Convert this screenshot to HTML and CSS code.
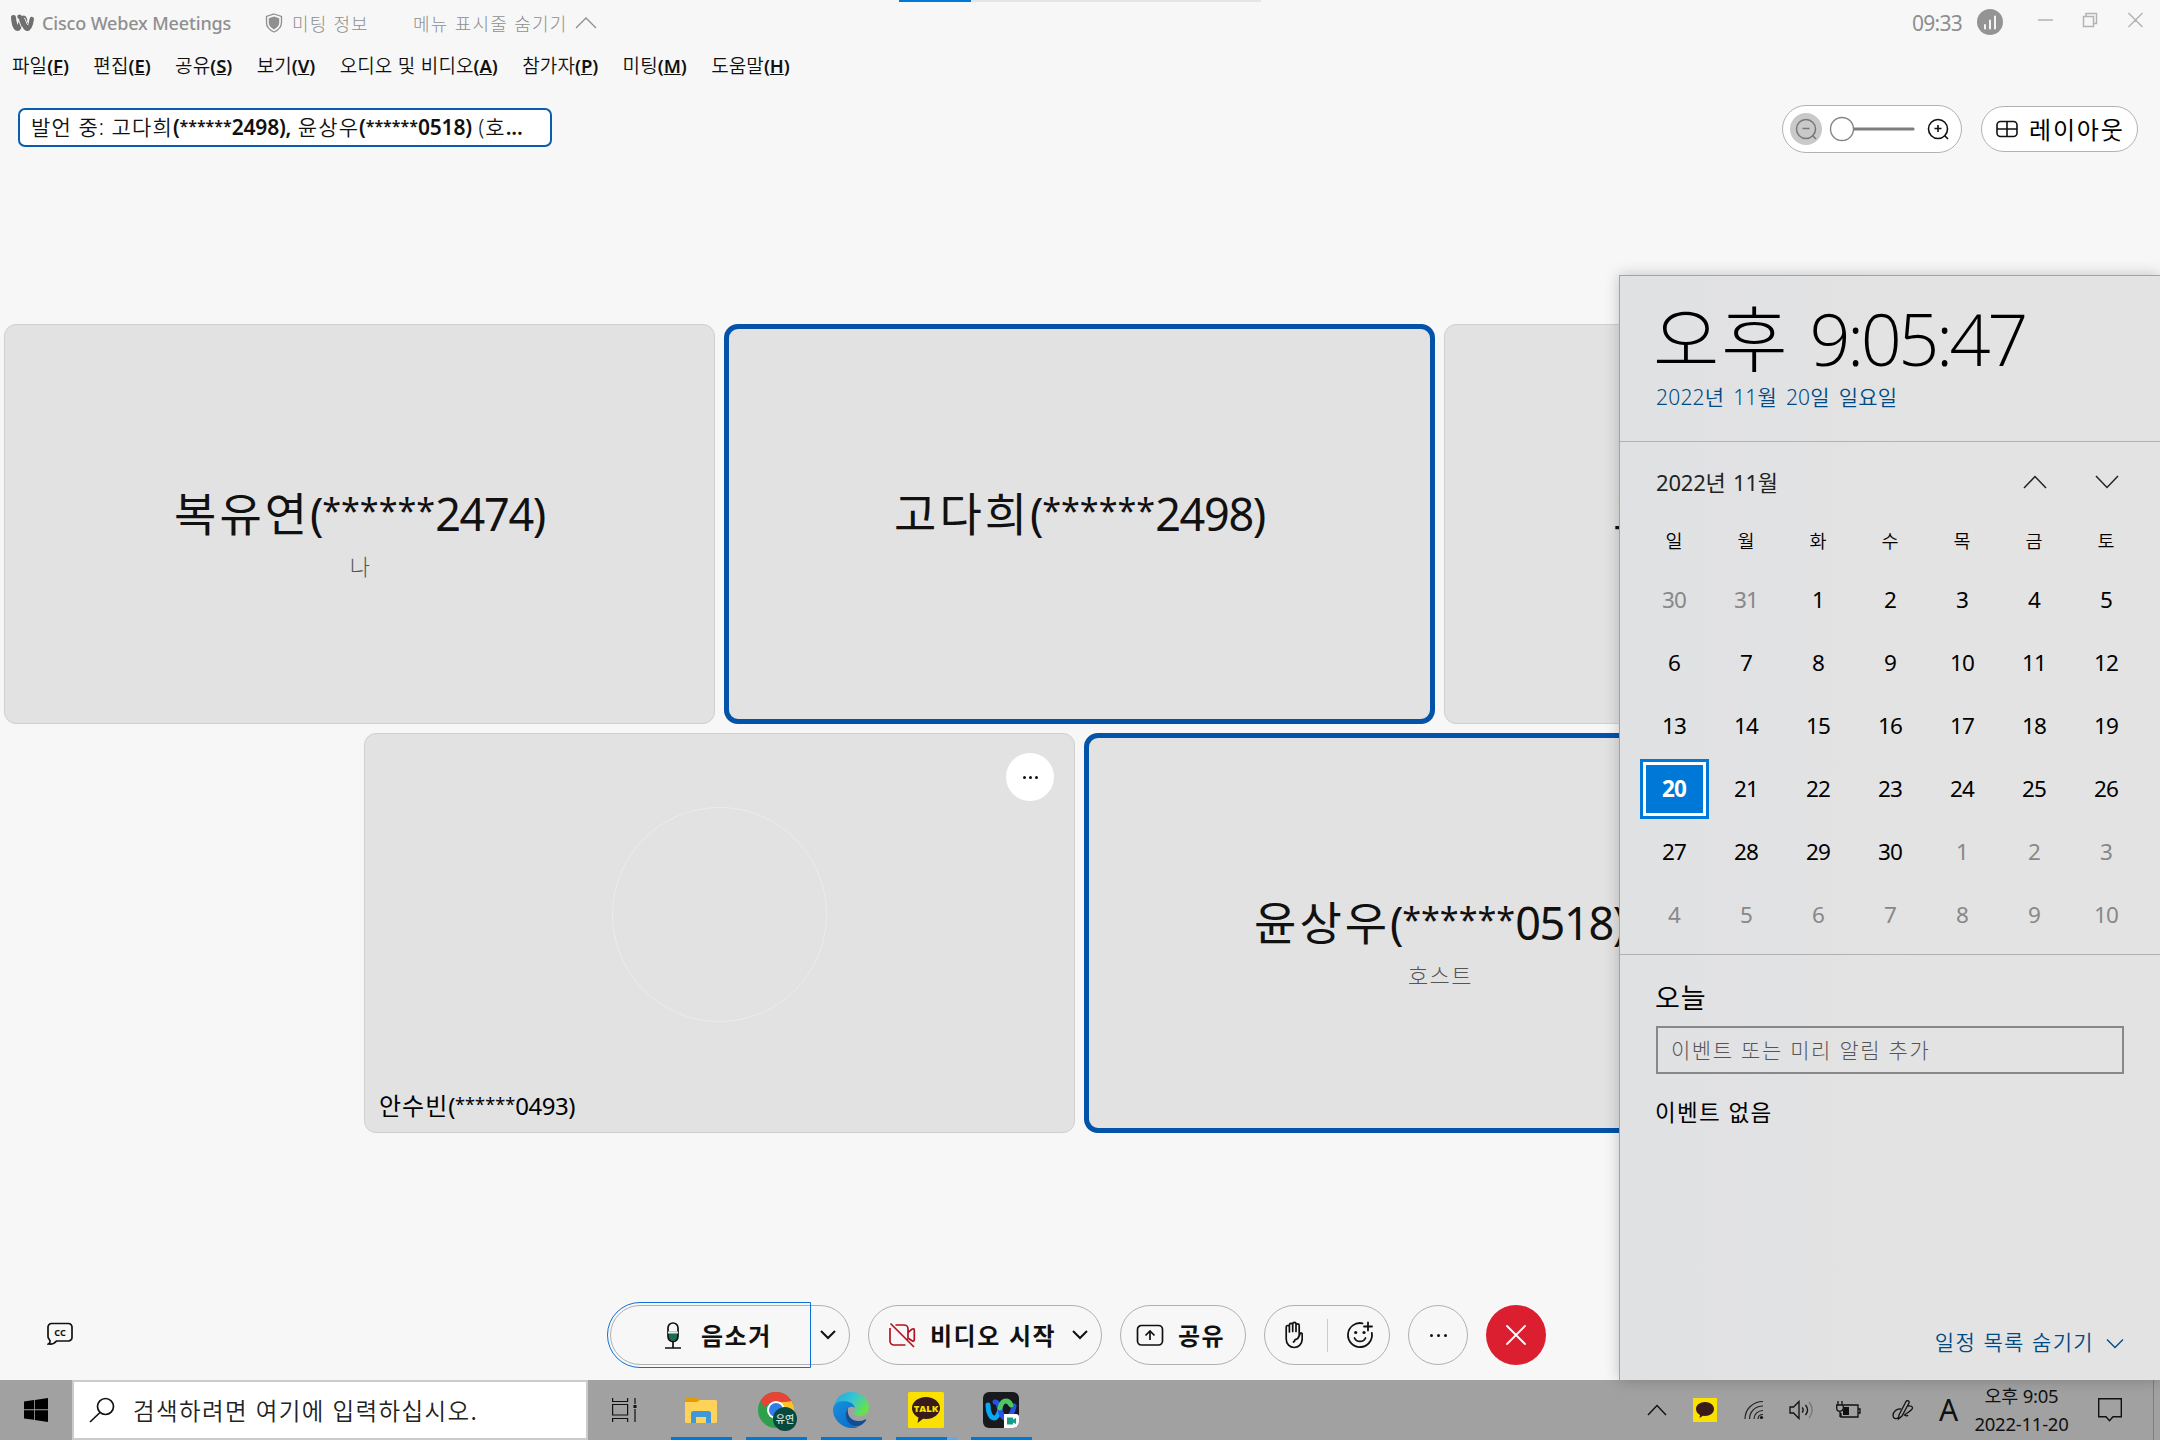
FILE: index.html
```html
<!DOCTYPE html>
<html lang="ko">
<head>
<meta charset="utf-8">
<title>Cisco Webex Meetings</title>
<link rel="stylesheet" href="styles.css">
</head>
<body>
<div class="desktop">
  <main class="app">
    <div class="progress"><i></i></div>
    <header class="titlebar">
      <svg class="brand" width="24" height="18" viewBox="0 0 24 18" fill="none" stroke="#6f6f6f" stroke-linecap="round"><path stroke-width="5" d="M3.500 3.500c.5 7 2.500 11 4.500 11S11.500 4 13.500 4s2 10.500 4 10.500"/><path stroke-width="4.500" d="M9.500 2.800c3 0 3.500 11.700 7.500 11.700 3 0 4.200-5 4.700-9.500"/><path stroke="#f7f7f7" stroke-width="1" d="M8.500 6c1.500 2 1.700 6 3.500 8M14.500 4c2 2 1.500 6 3.500 7M19.500 4c-1 1-1.500 3-2 4"/></svg>
      <span class="app-name">Cisco Webex Meetings</span>
      <svg class="shield" width="18" height="20" viewBox="0 0 18 20"><path d="M9 1l7.500 2.500v6c0 4.500-3 7.500-7.500 9.500C4.500 17 1.500 14 1.500 9.500v-6z" fill="none" stroke="#8f8f8f" stroke-width="1.300"/><path d="M9 3.500l5.200 1.800v4.500c0 3-2 5-5.200 6.700-3.200-1.700-5.200-3.700-5.200-6.700V5.300z" fill="#8f8f8f"/></svg>
      <span class="info">미팅 정보</span>
      <span class="hide-menu">메뉴 표시줄 숨기기</span>
      <svg width="22" height="12" viewBox="0 0 22 12" fill="none" stroke="#8f8f8f" stroke-width="1.300"><path d="M1 11L11 1l10 10"/></svg>
      <div class="window-tools">
        <span class="elapsed">09:33</span>
        <svg class="signal" width="26" height="26" viewBox="0 0 26 26"><circle cx="13" cy="13" r="13" fill="#949494"/><path d="M8 16v3.500M13 11.500v8M18 7.500v12" stroke="#f4f4f4" stroke-width="2" stroke-linecap="round"/></svg>
        <svg class="win-icons" width="108" height="18" viewBox="0 0 108 18" fill="none" stroke="#b3b3b3" stroke-width="1.500"><path d="M1 9h15M46.500 5.500h10v10h-10zM49 5.500V2.500h10.500v10h-3M91.500 2l14 14M105.500 2l-14 14"/></svg>
      </div>
    </header>
    <nav class="menu">
      <span>파일<b>(<u>F</u>)</b></span><span>편집<b>(<u>E</u>)</b></span><span>공유<b>(<u>S</u>)</b></span><span>보기<b>(<u>V</u>)</b></span><span>오디오 및 비디오<b>(<u>A</u>)</b></span><span>참가자<b>(<u>P</u>)</b></span><span>미팅<b>(<u>M</u>)</b></span><span>도움말<b>(<u>H</u>)</b></span>
    </nav>
    <section class="status-row">
      <div class="speaking">발언 중: 고다희<b>(<span class="mask">******</span>2498),</b> 윤상우<b>(<span class="mask">******</span>0518)</b> (호<b>...</b></div>
      <div class="zoom-bar">
        <svg width="178" height="46" viewBox="0 0 178 46" fill="none"><circle cx="23" cy="23" r="16" fill="#c9c9c9"/><g stroke="#777" stroke-width="1.500"><circle cx="23" cy="23" r="9.500"/><path d="M29.500 29.500l3.500 3.500M19.500 22.500h7"/></g><path d="M71 23h59" stroke="#7d7d7d" stroke-width="3.200" stroke-linecap="round"/><circle cx="59" cy="23" r="11.500" fill="#fff" stroke="#858585" stroke-width="1.400"/><g stroke="#111" stroke-width="1.600"><circle cx="155" cy="23" r="9.500"/><path d="M161.500 29.500l3.500 3.500M151.500 22.500h7M155 19v7"/></g></svg>
      </div>
      <div class="layout-button">
        <svg width="22" height="18" viewBox="0 0 22 18" fill="none" stroke="#111" stroke-width="1.600"><rect x="1" y="1.500" width="20" height="15" rx="3.500"/><path d="M11 1.500v15M1 9h20"/></svg><span>레이아웃</span>
      </div>
    </section>
    <section class="stage">
      <div class="tile-row">
        <article class="tile"><h2>복유연<span class="id">(<span class="mask">******</span>2474)</span></h2><p>나</p></article>
        <article class="tile active"><h2>고다희<span class="id">(<span class="mask">******</span>2498)</span></h2></article>
        <article class="tile covered"><h2>고</h2></article>
      </div>
      <div class="tile-row second">
        <article class="tile camera"><div class="avatar"></div><div class="tile-more"><i></i><i></i><i></i></div><span class="caption">안수빈<span class="id">(<span class="mask">******</span>0493)</span></span></article>
        <article class="tile active"><h2>윤상우<span class="id">(<span class="mask">******</span>0518)</span></h2><p>호스트</p></article>
      </div>
    </section>
    <footer class="controls">
      <svg class="cc" width="26" height="24" viewBox="0 0 26 24"><path d="M4.500 1.500h17a3.500 3.500 0 0 1 3.500 3.500v10.500a3.500 3.500 0 0 1-3.500 3.500H9.500C8 21 5 22.500 1.500 22c2-1.500 2-3 .8-4.500C1.500 16.500 1 16 1 14.500V5A3.500 3.500 0 0 1 4.500 1.500z" fill="none" stroke="#111" stroke-width="1.700"/><text x="13" y="14" text-anchor="middle" class="cc-text">CC</text></svg>
      <div class="buttons">
        <div class="pill mute">
          <div class="mute-main"><svg width="18" height="27" viewBox="0 0 18 27" fill="none" stroke="#111" stroke-width="1.700"><path d="M4 9.500h10v4.500a5 5 0 0 1-10 0z" fill="#1d6b50" stroke="none"/><rect x="4" y="1" width="10" height="18.500" rx="5"/><path d="M4 10.500h10" stroke="#dfece7" stroke-width="2"/><path d="M9 19.500V22M9 22v3.500M1 26h16"/></svg><span>음소거</span></div>
          <svg class="down" width="16" height="10" viewBox="0 0 16 10"><path d="M1 1l7 7 7-7"/></svg>
        </div>
        <div class="pill video">
          <svg width="28" height="26" viewBox="0 0 28 26" fill="none" stroke="#b3131f" stroke-width="1.700"><path d="M2 6v13a4 4 0 0 0 4 4h11.500M7.500 3H16a4 4 0 0 1 4 4v10.500M20 10.500l4-3.300c1.300-.9 2.300-.4 2.300 1v9.500c0 1.400-1 1.900-2.300 1L20 16M2.500 1.500l23.500 23.500"/></svg><span>비디오 시작</span><svg class="down" width="16" height="10" viewBox="0 0 16 10"><path d="M1 1l7 7 7-7"/></svg>
        </div>
        <div class="pill share"><svg width="28" height="24" viewBox="0 0 28 24" fill="none" stroke="#111" stroke-width="1.700"><rect x="1.500" y="2.500" width="25" height="19.500" rx="4"/><path d="M14 17V8M9.500 12.500L14 8l4.500 4.500"/></svg><span>공유</span></div>
        <div class="pill react">
          <svg width="18" height="28" viewBox="0 0 18 28" fill="none" stroke="#111" stroke-width="1.700" stroke-linejoin="round" stroke-linecap="round"><path d="M1.200 18V6c0-2 3.200-2 3.200 0v5M4.400 10V4c0-2.200 3.300-2.200 3.300 0v6.500M7.700 10V3c0-2.200 3.300-2.200 3.300 0v7.500M11 10V4.500c0-2.100 3.200-2.100 3.200 0V15l.8-2c.7-1.600 2.200-1.200 2.200.2V18c0 5-3.600 8.500-8 8.500s-8-3.500-8-8.500M14.200 14.500c-.5 2.500-1.700 3.700-4 4-.2 1-.7 1.800-1.700 2.500"/></svg>
          <i></i>
          <svg width="28" height="28" viewBox="0 0 28 28" fill="none" stroke="#111" stroke-width="1.800" stroke-linecap="round"><path d="M16.500 2.300A12 12 0 1 0 25.800 12M22 1.500v8M18 5.500h8M8.500 17c2 4.500 9 4.500 11 0"/><circle cx="9.700" cy="11.500" r="1.600" fill="#111" stroke="none"/><circle cx="18" cy="11.500" r="1.600" fill="#111" stroke="none"/></svg>
        </div>
        <div class="pill more"><i></i><i></i><i></i></div>
        <div class="leave"><svg width="20" height="20" viewBox="0 0 20 20" stroke="#fff" stroke-width="1.800" stroke-linecap="round"><path d="M1 1l18 18M19 1L1 19"/></svg></div>
      </div>
    </footer>
  </main>

  <aside class="flyout">
    <div class="now"><div class="clock"><span>오후</span>9:05:47</div><div class="long-date">2022년 11월 20일 일요일</div></div>
    <div class="calendar">
      <div class="month-head"><span>2022년 11월</span><svg width="24" height="14" viewBox="0 0 24 14"><path d="M1 13L12 1.500 23 13"/></svg><svg width="24" height="14" viewBox="0 0 24 14"><path d="M1 1l11 11.500L23 1"/></svg></div>
      <div class="weekdays"><span>일</span><span>월</span><span>화</span><span>수</span><span>목</span><span>금</span><span>토</span></div>
      <div class="days">
        <span class="dim">30</span><span class="dim">31</span><span>1</span><span>2</span><span>3</span><span>4</span><span>5</span>
        <span>6</span><span>7</span><span>8</span><span>9</span><span>10</span><span>11</span><span>12</span>
        <span>13</span><span>14</span><span>15</span><span>16</span><span>17</span><span>18</span><span>19</span>
        <span class="today">20</span><span>21</span><span>22</span><span>23</span><span>24</span><span>25</span><span>26</span>
        <span>27</span><span>28</span><span>29</span><span>30</span><span class="dim">1</span><span class="dim">2</span><span class="dim">3</span>
        <span class="dim">4</span><span class="dim">5</span><span class="dim">6</span><span class="dim">7</span><span class="dim">8</span><span class="dim">9</span><span class="dim">10</span>
      </div>
    </div>
    <div class="agenda">
      <h3>오늘</h3>
      <div class="event-input">이벤트 또는 미리 알림 추가</div>
      <p>이벤트 없음</p>
      <div class="hide-agenda"><span>일정 목록 숨기기</span><svg width="18" height="10" viewBox="0 0 18 10"><path d="M1 .5l8 8 8-8"/></svg></div>
    </div>
  </aside>

  <div class="taskbar">
    <div class="start"><svg width="24" height="24" viewBox="0 0 24 24"><path d="M0 3.400L10 2v9.300H0zM10.800 1.900L24 0v11.300H10.800zM0 12.200h10v9.600L0 20.600zM10.800 12.200H24V24l-13.200-1.900z"/></svg></div>
    <div class="search"><svg width="26" height="26" viewBox="0 0 26 26" fill="none" stroke="#111" stroke-width="1.700"><circle cx="16.500" cy="9.500" r="8"/><path d="M11 15.500L1 25"/></svg><span>검색하려면 여기에 입력하십시오.</span></div>
    <div class="taskview"><svg width="25" height="24" viewBox="0 0 25 24" fill="none" stroke="#111" stroke-width="1.200"><path d="M.6 0v3.500h15V0M.6 6.500h15v10.500H.6zM.6 24v-3.500h15V24M23 0v6M23 11v13"/><path d="M21.500 7h3v3h-3z" fill="#111" stroke="none"/></svg></div>
    <div class="tasks">
      <div class="task"><svg width="36" height="36" viewBox="0 0 36 36"><path d="M2 7a1.500 1.500 0 0 1 1.500-1.500H14l3 3H32A2 2 0 0 1 34 11v5H2z" fill="#e09d08"/><path d="M2 10h12l3-2h15.500A1.500 1.500 0 0 1 34 9.500V29.500A1.500 1.500 0 0 1 32.500 31h-29A1.500 1.500 0 0 1 2 29.500z" fill="#ffd35a"/><path d="M8 31V21.500A2.500 2.500 0 0 1 10.500 19h15a2.500 2.500 0 0 1 2.500 2.500V31h-5v-6H13v6z" fill="#3f97dc"/></svg></div>
      <div class="task"><svg class="chrome" width="40" height="40" viewBox="0 0 40 40"><circle cx="18" cy="18" r="18" fill="#2da04b"/><path d="M18 18L2.400 9A18 18 0 0 1 33.600 9z" fill="#e74336"/><path d="M18 9H33.600A18 18 0 0 1 18 36l8-13.500z" fill="#fbc22c"/><path d="M2.400 9l7.800 13.500L18 18 10 10z" fill="#2da04b"/><path d="M8 9h25.600L28 10H12l-6 5-3.600-6z" fill="#e74336"/><circle cx="18" cy="18" r="9" fill="#fff"/><circle cx="18" cy="18" r="7" fill="#2f7de9"/><circle cx="27" cy="27" r="12" fill="#08493f"/><text x="27" y="30.800" text-anchor="middle" class="profile-text">유연</text></svg></div>
      <div class="task"><svg width="36" height="36" viewBox="0 0 36 36"><defs><linearGradient id="eg" x1="0" y1="0" x2="1" y2=".5"><stop offset="0" stop-color="#22a5df"/><stop offset=".55" stop-color="#35c7d2"/><stop offset="1" stop-color="#69e04b"/></linearGradient><linearGradient id="eb" x1="0" y1="0" x2=".7" y2="1"><stop offset="0" stop-color="#1b8fdc"/><stop offset="1" stop-color="#0870cc"/></linearGradient></defs><path d="M1 14C3 5 10 0 18 0c10 0 18 7 18 15 0 6-4 9-9 9-4 0-6-1.500-6-3 0-1 1-2 1-4 0-5-5-8-10-8-5 0-9 2-11 5z" fill="url(#eg)"/><path d="M0 18c0-6 5-9 11-9 6 0 10 3 11 7-4-3-9 0-9 6 0 8 6 13 12 13.500C12 39 0 29 0 18z" fill="url(#eb)"/><path d="M15 16c-5 7-1 19 10 18.500 3-1 6-3 8-6 .5-1-.3-1.500-1-1-8 4-19 0-17-11.500z" fill="#104f96"/></svg></div>
      <div class="task talk"><svg width="36" height="36" viewBox="0 0 36 36"><rect width="36" height="36" rx="1.500" fill="#fae100"/><path d="M18 5c8 0 14 5 14 11s-6 11-14 11l-3-.3L9.500 31l1-5.500C6.500 23.500 4 20 4 16 4 10 10 5 18 5z" fill="#391b1b"/><text x="18" y="20" text-anchor="middle" class="talk-text">TALK</text></svg></div>
      <div class="task"><svg width="36" height="36" viewBox="0 0 36 36" fill="none" stroke-linecap="round"><rect width="36" height="36" rx="6" fill="#17191c"/><path d="M5 13c0 8 3 13 6 13s5-5 6-9" stroke="#0aa7f5" stroke-width="5"/><path d="M12 10c5-1 5 16 10 16 5 0 8-6 9-12" stroke="#2752e6" stroke-width="5"/><path d="M17 16c1-4 3-7 6-7 2.500 0 4 2 5 4" stroke="#4cc764" stroke-width="5"/><path d="M21 22h12a3 3 0 0 1 3 3v5a6 6 0 0 1-6 6h-9z" fill="#fff"/><path d="M24 25.500h6v2l3-1.500v6l-3-1.500v2h-6z" fill="#159e83"/></svg></div>
    </div>
    <div class="tray">
      <svg width="20" height="12" viewBox="0 0 20 12" fill="none" stroke="#111" stroke-width="1.400"><path d="M1 11l9-9.500L19 11"/></svg>
      <svg class="t-talk" width="24" height="24" viewBox="0 0 24 24"><rect width="24" height="24" fill="#fae100"/><path d="M12 4c5 0 9 3 9 7s-4 7-9 7l-2-.2L6.500 20l.5-3c-2.500-1.300-4-3.500-4-6 0-4 4-7 9-7z" fill="#391b1b"/></svg>
      <svg class="t-wifi" width="20" height="20" viewBox="0 0 20 20" fill="none" stroke="#222" stroke-width="1.200"><path d="M1 19C1 9 9 1.500 19 1.500M5.500 19C5.500 12 11 6 19 6M10 19c0-5 4-8.500 9-8.500M14 19c0-2.500 2-4.500 5-4.500"/><circle cx="17.500" cy="17.500" r="1.600" fill="#111" stroke="none"/></svg>
      <svg class="t-sound" width="24" height="20" viewBox="0 0 24 20" fill="none" stroke="#111" stroke-width="1.300"><path d="M1 7h3.500L10 1.500v17L4.500 13H1zM13 7.500c1.500 1.500 1.500 3.500 0 5M16.500 5c2.500 3 2.500 7 0 10"/><path d="M20 2c4 5 4 11 0 16" stroke="#777"/></svg>
      <svg class="t-battery" width="25" height="18" viewBox="0 0 25 18" fill="none" stroke="#111" stroke-width="1.300"><path d="M8 4h14v12H5v-4M22 8h2v4h-2M2 0v4M6 0v4M.7 4h6.600v3a3.300 3.300 0 0 1-6.600 0zM4 10.500V16"/><path d="M8 6h5v8H7V9z" fill="#111" stroke="none"/></svg>
      <svg class="t-pen" width="22" height="22" viewBox="0 0 22 22" fill="none" stroke="#111" stroke-width="1.300"><path d="M7 16l7-13.500c1-1.700 4-.3 3 1.500L10 17l-3.500 3zM9 10c-4-1-8 3-8 6.500 0 3 3 4 5.500 2M16 7c3-.5 4.500.5 4.500 2 0 2-4 4-8 7 2 1.500 3 1 3.500 0"/></svg>
      <span class="ime">A</span>
      <div class="time"><span>오후 9:05</span><span>2022-11-20</span></div>
      <svg class="t-note" width="24" height="24" viewBox="0 0 24 24" fill="none" stroke="#111" stroke-width="1.400"><path d="M.7 .7h22.600v18H15l-3.500 4-3.500-4H.7z"/></svg>
      <i class="show-desktop"></i>
    </div>
  </div>
</div>
</body>
</html>
```
FILE: styles.css
```css
* { box-sizing: border-box; }
body { margin: 0; font-family: "Noto Sans", "Noto Sans CJK KR", sans-serif; color: #111; }
svg { display: block; flex: none; }
h2, h3, p { margin: 0; font-weight: 400; }
.desktop { position: relative; width: 2160px; height: 1440px; overflow: hidden; display: flex; flex-direction: column; background: #f7f7f7; white-space: nowrap; }
.app { height: 1380px; display: flex; flex-direction: column; overflow: hidden; }
.progress { height: 2px; width: 362px; margin-left: 899px; background: #e5e5e5; flex: none; }
.progress i { display: block; width: 72px; height: 2px; background: #0078d7; }

.titlebar { height: 41px; display: flex; align-items: center; padding-left: 10px; color: #8f8f8f; font-size: 18px; flex: none; }
.app-name { margin-left: 8px; width: 190px; font-weight: 500; letter-spacing: -0.15px; }
.shield { margin-left: 33px; }
.info, .hide-menu { font-family: "Noto Sans CJK KR", sans-serif; font-weight: 300; font-size: 18px; line-height: 24px; }
.info { width: 76px; margin-left: 9px; letter-spacing: 1.1px; }
.hide-menu { width: 154px; margin: 0 8px 0 45px; letter-spacing: 1.2px; }
.window-tools { margin-left: auto; display: flex; align-items: center; padding-right: 15px; }
.elapsed { font-size: 21px; width: 53px; letter-spacing: -0.7px; }
.signal { margin-left: 12px; margin-top: -1px; }
.win-icons { margin: -5px 0 0 34px; }

.menu { height: 45px; display: flex; align-items: center; gap: 24.500px; padding-left: 12px; font: 350 19px/24px "Noto Sans CJK KR", sans-serif; letter-spacing: 0.1px; flex: none; }
.menu b { font: 600 18.500px "Noto Sans"; letter-spacing: -0.1px; }

.status-row { height: 80px; display: flex; align-items: center; padding: 0 22px 0 18px; flex: none; }
.speaking { width: 534px; height: 39px; border: 2px solid #0b5cad; border-radius: 7px; background: #fff; padding-left: 11px; line-height: 35px; font-size: 21px; font-weight: 350; font-family: "Noto Sans", "Noto Sans CJK KR"; letter-spacing: 1.1px; margin-top: -1px; }
.speaking b { font-weight: 600; letter-spacing: -0.2px; }
.mask { font-size: 0.76em; vertical-align: 0.22em; line-height: 0; letter-spacing: 0; }
.zoom-bar { margin: 1px 0 0 auto; width: 180px; height: 48px; border: 1.500px solid #b2b2b2; border-radius: 24px; background: #fff; }
.layout-button { margin: 1px 0 0 19px; width: 157px; height: 46px; border: 1.500px solid #b2b2b2; border-radius: 23px; background: #fff; display: flex; align-items: center; padding-left: 14px; gap: 11px; font: 400 24px/32px "Noto Sans CJK KR"; letter-spacing: 1.800px; color: #000; }

.stage { flex: 1; padding: 156px 0 0 4px; }
.tile-row { display: flex; gap: 9px; height: 400px; }
.tile-row.second { margin: 9px 0 0 360px; }
.tile { width: 711px; height: 400px; flex: none; border: 1px solid #d0d0d0; border-radius: 12px; background: #e2e2e2; display: flex; flex-direction: column; align-items: center; position: relative; }
.tile.active { border: 5px solid #0353a8; border-radius: 14px; }
.tile h2 { margin-top: 156px; font-size: 46px; line-height: 64px; letter-spacing: 3px; }
.tile.active h2 { margin-top: 152px; }
h2 .id { font-size: 45px; }
.id { letter-spacing: -0.03em; }
.tile p { font: 300 22px/28px "Noto Sans CJK KR"; letter-spacing: 1.500px; color: #555; margin-top: 5px; padding-left: 2px; }
.tile.covered { align-items: flex-start; padding-left: 168px; }
.avatar { width: 215px; height: 215px; margin-top: 73px; border: 1px solid #ececec; border-radius: 50%; }
.tile-more { position: absolute; right: 20px; top: 19px; width: 48px; height: 48px; border-radius: 50%; background: #fff; }
.tile-more, .more { display: flex; align-items: center; justify-content: center; gap: 3px; }
.tile-more i, .more i { width: 3px; height: 3px; border-radius: 50%; background: #111; }
.caption { margin-top: auto; align-self: flex-start; padding: 0 0 9px 14px; font-size: 24px; line-height: 34px; letter-spacing: 1px; color: #000; }
.caption .id { letter-spacing: -0.02em; }

.controls { height: 90px; display: flex; align-items: center; padding-left: 47px; flex: none; }
.cc { margin-top: -2px; }
.cc-text { font: 700 9px "Noto Sans"; fill: #111; }
.buttons { display: flex; gap: 18px; margin-left: 537px; }
.pill { height: 60px; border: 1.500px solid #b0b0b0; border-radius: 30px; display: flex; align-items: center; font: 700 24px/34px "Noto Sans CJK KR"; letter-spacing: 1.500px; }
.pill span { margin-top: -1px; }
.mute { width: 240px; position: relative; }
.mute-main { position: absolute; left: -4px; top: -4px; width: 204px; height: 66px; border: 1.500px solid #0f6fd6; border-radius: 33px 0 0 33px; display: flex; align-items: center; gap: 19px; padding-left: 56px; }
.down { fill: none; stroke: #111; stroke-width: 2; }
.mute .down { margin-left: 209px; }
.video { width: 234px; padding-left: 19px; }
.video span { margin: -1px auto 0 14px; }
.video .down { margin-right: 13px; }
.share { width: 126px; padding-left: 15px; gap: 14px; }
.react { width: 126px; padding-left: 20px; }
.react i { width: 1px; height: 33px; background: #ccc; margin: 0 18px 0 24px; }
.more { width: 60px; gap: 4px; }
.leave { width: 60px; height: 60px; border-radius: 50%; background: #dc1f30; display: grid; place-items: center; }

.flyout { position: absolute; left: 1619px; top: 275px; width: 541px; height: 1105px; border: 1px solid #a3a3a3; border-width: 1px 0 0 1px; background: linear-gradient(90deg, #e0e1e3, #e3e3e3 55%); box-shadow: 0 0 14px rgba(0,0,0,.22); color: #000; display: flex; flex-direction: column; }
.now { height: 166px; border-bottom: 1px solid #b1b1b1; padding: 13px 0 0 33px; }
.clock { font: 300 72px/92px "Open Sans", "Noto Sans CJK KR"; letter-spacing: -3.500px; }
.clock span { font-family: "Noto Sans CJK KR"; letter-spacing: 2px; margin-right: 20px; }
.long-date { margin: -3px 0 0 3px; font-size: 21px; line-height: 32px; color: #004a83; letter-spacing: 0.2px; word-spacing: 3.200px; font-weight: 350; }
.calendar { height: 513px; border-bottom: 1px solid #b1b1b1; }
.month-head { display: flex; align-items: center; height: 80px; padding-left: 36px; font-size: 22px; letter-spacing: -0.2px; word-spacing: 2px; color: #222; }
.month-head svg { fill: none; stroke: #222; stroke-width: 1.500; margin-right: 48px; }
.month-head svg + svg { margin-right: 41px; }
.month-head span { margin: -2px auto 0 0; }
.weekdays { display: grid; grid-template-columns: repeat(7, 72px); margin-left: 18px; text-align: center; font: 350 18.500px/37px "Noto Sans CJK KR"; height: 47px; }
.days { display: grid; grid-template-columns: repeat(7, 72px); grid-auto-rows: 63px; margin: -1px 0 0 18px; }
.days span { display: grid; place-items: center; font-size: 22.500px; letter-spacing: -0.8px; }
.days .dim { color: #888; }
.days .today { width: 69px; height: 60px; place-self: center; background: #0078d7; border: 3px solid #0078d7; box-shadow: inset 0 0 0 3px #fff; color: #fff; font-weight: 700; }
.agenda { flex: 1; padding: 23px 36px 0 36px; display: flex; flex-direction: column; font-family: "Noto Sans CJK KR"; }
.agenda h3 { font-size: 27px; line-height: 38px; letter-spacing: 1px; margin-left: -1px; }
.event-input { height: 48px; margin-top: 10px; border: 2px solid #888; padding-left: 13px; line-height: 43px; font-size: 21px; font-weight: 300; letter-spacing: 1.550px; color: #555; }
.agenda p { font-size: 22.500px; line-height: 32px; margin: 21px 0 0 -1px; letter-spacing: 1.300px; }
.hide-agenda { margin: auto 0 22px; display: flex; align-items: center; justify-content: flex-end; gap: 12px; font-size: 21px; line-height: 34px; letter-spacing: 1.350px; color: #004a83; font-weight: 350; }
.hide-agenda svg { fill: none; stroke: #004a83; stroke-width: 1.300; margin-top: 6px; }

.taskbar { height: 60px; display: flex; align-items: center; background: #a1a1a1; flex: none; }
.start { width: 72px; padding-left: 24px; }
.search { width: 516px; height: 60px; border: 2px solid #cbcbcb; background: #fff; display: flex; align-items: center; padding-left: 15px; gap: 18px; font: 350 23.500px/32px "Noto Sans CJK KR"; color: #222; letter-spacing: 1.350px; }
.taskview { margin-left: 24px; }
.tasks { display: flex; gap: 14px; margin-left: 34px; }
.task { width: 61px; height: 60px; border-bottom: 3px solid #0078d7; display: flex; padding: 12px 0 0 12px; }
.talk { border-image: linear-gradient(90deg, #0078d7 80%, #63a9e5 80%) 3; }
.profile-text { font: 500 10px "Noto Sans CJK KR"; fill: #d5e2df; }
.talk-text { font: 800 9.500px "Open Sans"; fill: #fae100; }
.tray { margin-left: auto; height: 60px; display: flex; align-items: center; }
.t-talk { margin-left: 26px; }
.t-wifi { margin-left: 27px; }
.t-sound { margin-left: 25px; }
.t-battery { margin-left: 23px; }
.t-pen { margin-left: 31px; }
.ime { margin-left: 25px; width: 21px; font-size: 30px; line-height: 40px; }
.time { width: 97px; margin-left: 13px; display: flex; flex-direction: column; align-items: center; font-size: 18.500px; line-height: 28px; letter-spacing: -0.250px; }
.t-note { margin-left: 28px; }
.show-desktop { width: 7px; height: 60px; margin-left: 31px; border-left: 1px solid #7d7d7d; }
```
